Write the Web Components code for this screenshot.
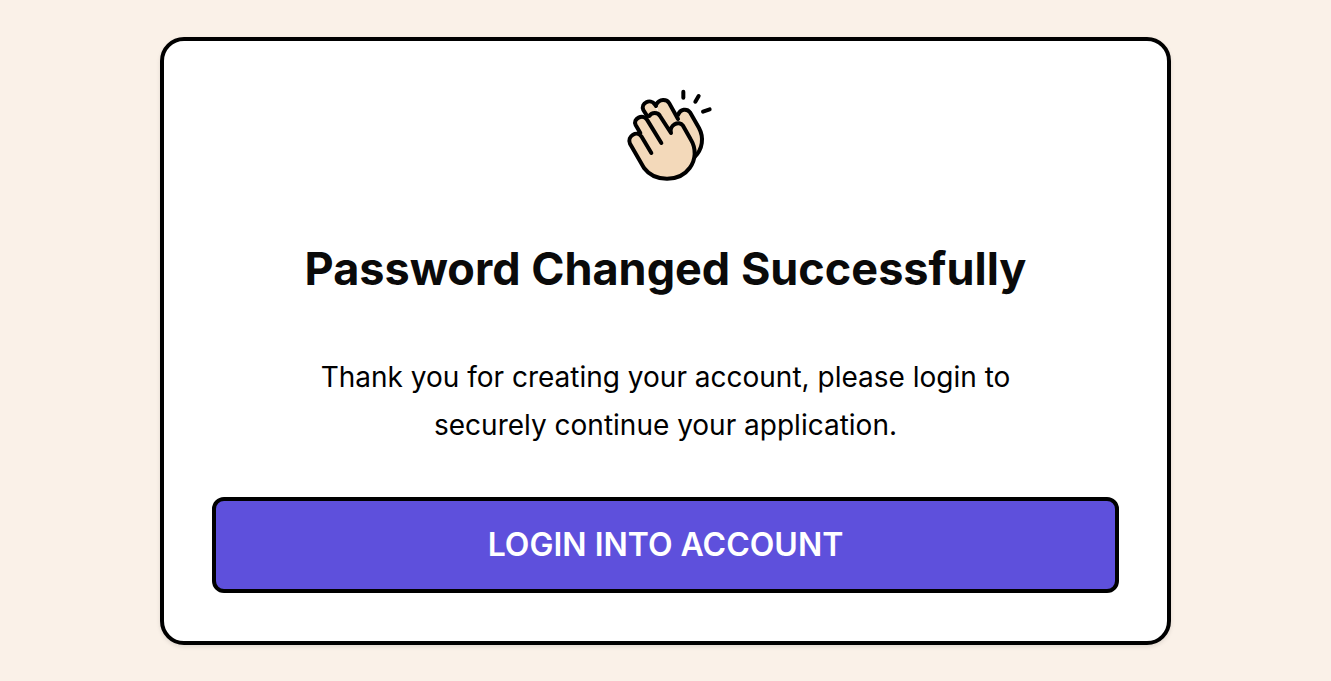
<!DOCTYPE html>
<html lang="en">
<head>
<meta charset="utf-8">
<meta name="viewport" content="width=device-width, initial-scale=1">
<title>Password Changed Successfully</title>
<style>
    body {
        margin: 0;
        background-color: #faf1e8;
        color: #000;
        font-family: Inter, "Liberation Sans", sans-serif;
    }
</style>
</head>
<body>
<success-page>
    <message-card>
        <clap-icon slot="icon"></clap-icon>
        <span slot="title">Password Changed Successfully</span>
        <span slot="text">Thank you for creating your account, please login to securely continue your application.</span>
        <action-button slot="action">LOGIN INTO ACCOUNT</action-button>
    </message-card>
</success-page>

<script>
//PAGE - centers the card in the window
var template_page = document.createElement("template");

template_page.innerHTML = `
        <style>
            :host {
                display:flex;
                align-items:center;
                box-sizing:border-box;
                min-height:100vh;
                padding:36px 12%;
            }
            main {
                flex:1;
            }
        </style>
<main>
    <slot></slot>
</main>
`;

class SuccessPage extends HTMLElement {
    constructor(){
        super();
        this.attachShadow({mode:"open"})
    }

    connectedCallback(){
        this.shadowRoot.appendChild(template_page.content.cloneNode(true));
    }
}

customElements.define("success-page", SuccessPage)


//CARD - icon, title, text and action
var template_card = document.createElement("template");

template_card.innerHTML = `
        <style>
            :host {
                display:block;
            }
            .card {
                display:flex;
                flex-direction:column;
                align-items:center;
                gap:48px;
                padding:48px;
                border:4px solid #000;
                border-radius:24px;
                background-color:#fff;
                box-shadow:0 2px 4px rgba(0,0,0,0.1);
                text-align:center;
            }
            h1 {
                margin:0;
                padding:12px 0;
                color:#0a0a0a;
                font-size:45px;
                font-weight:700;
                line-height:48px;
            }
            p {
                margin:0;
                max-width:720px;
                font-size:28px;
                line-height:48px;
            }
            slot[name="action"] {
                display:block;
                width:100%;
            }
        </style>
<section class="card">
    <slot name="icon"></slot>
    <h1><slot name="title"></slot></h1>
    <p><slot name="text"></slot></p>
    <slot name="action"></slot>
</section>
`;

class MessageCard extends HTMLElement {
    constructor(){
        super();
        this.attachShadow({mode:"open"})
    }

    connectedCallback(){
        this.shadowRoot.appendChild(template_card.content.cloneNode(true));
    }
}

customElements.define("message-card", MessageCard)


//ICON - clapping hands
var template_clap = document.createElement("template");

template_clap.innerHTML = `
        <style>
            :host {
                display:block;
            }
            svg {
                display:block;
                width:96px;
                height:96px;
                fill:#f3d9ba;
                stroke:#000;
                stroke-width:12;
                stroke-linecap:round;
                stroke-linejoin:round;
            }
        </style>
<svg viewBox="8 28 288 288" aria-hidden="true">
    <!-- back hand -->
    <path d="M98 112L85 92C77 73 103 57 117 76L130 102L124 76C133 57 154 60 161 71L187 116L190 103C196 87 214 86 223 98L250 145C264 173 261 207 236 231L170 220Z" stroke="none"/>
    <path d="M96 110L84 91C75 71 105 54 119 75L122 79M122 76C132 55 155 58 162 71L188 118M188 106C195 87 215 86 224 98L251 145C266 173 263 207 237 233"/>
    <!-- front hand -->
    <path d="M86 265L45 194C36 176 57 155 73 168L75 160L61 135C55 119 79 102 94 121L104 111C112 97 127 99 133 109L166 160C161 137 192 120 203 138L226 179C243 207 242 240 223 265C193 307 119 309 86 265Z" stroke="none"/>
    <path d="M108 220L78 170C65 151 34 170 44 192L86 265C119 309 193 307 223 265C242 240 243 207 226 179L203 138C191 121 160 137 167 160L134 109C128 97 109 97 102 109M138 190L95 120C83 101 51 117 61 136L75 160"/>
    <!-- clap marks -->
    <path d="M204 36V54M250 49L240 66M283 89L263 96"/>
</svg>
`;

class ClapIcon extends HTMLElement {
    constructor(){
        super();
        this.attachShadow({mode:"open"})
    }

    connectedCallback(){
        this.shadowRoot.appendChild(template_clap.content.cloneNode(true));
    }
}

customElements.define("clap-icon", ClapIcon)


//BUTTON - full width action
var template_button = document.createElement("template");

template_button.innerHTML = `
        <style>
            :host {
                display:block;
            }
            button {
                display:block;
                width:100%;
                padding:20px 24px;
                border:4px solid #000;
                border-radius:12px;
                background-color:#5e50dc;
                color:#fff;
                font-family:inherit;
                font-size:32px;
                font-weight:600;
                line-height:48px;
                cursor:pointer;
            }
        </style>
<button type="button"><slot></slot></button>
`;

class ActionButton extends HTMLElement {
    constructor(){
        super();
        this.attachShadow({mode:"open"})
    }

    connectedCallback(){
        this.shadowRoot.appendChild(template_button.content.cloneNode(true));
    }
}

customElements.define("action-button", ActionButton)
</script>
</body>
</html>
